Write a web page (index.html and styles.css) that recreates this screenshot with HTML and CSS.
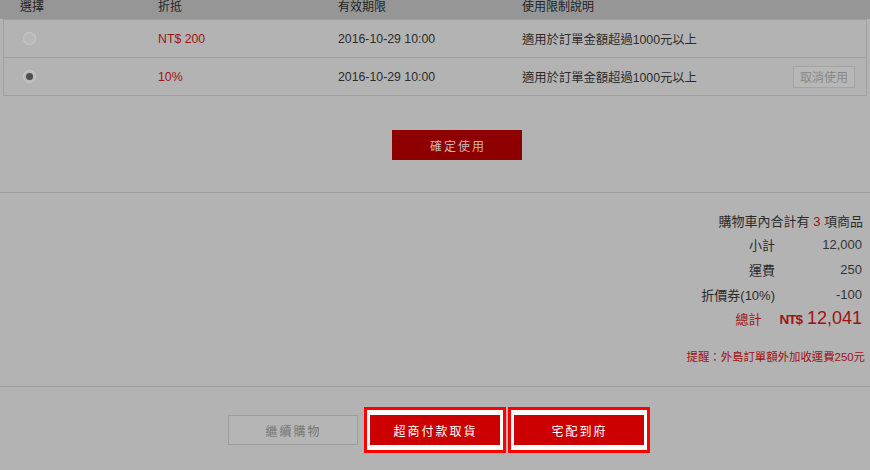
FILE: index.html
```html
<!DOCTYPE html>
<html lang="zh-Hant">
<head>
    <meta charset="UTF-8">
    <meta name="viewport" content="width=device-width, initial-scale=1.0">
    <title>購物車</title>
    <link rel="stylesheet" href="styles.css">
</head>
<body>
    <div class="coupons">
        <div class="coupons-head">
            <div>選擇</div>
            <div>折抵</div>
            <div>有效期限</div>
            <div>使用限制說明</div>
        </div>
        <div class="coupons-body">
            <div class="coupon-row">
                <div><span class="radio"></span></div>
                <div class="red">NT$ 200</div>
                <div>2016-10-29 10:00</div>
                <div class="desc">適用於訂單金額超過1000元以上</div>
            </div>
            <div class="coupon-row">
                <div><span class="radio checked"></span></div>
                <div class="red">10%</div>
                <div>2016-10-29 10:00</div>
                <div class="desc">
                    <span>適用於訂單金額超過1000元以上</span>
                    <button class="btn-cancel">取消使用</button>
                </div>
            </div>
        </div>
    </div>

    <div class="confirm">
        <button class="btn-confirm">確定使用</button>
    </div>

    <div class="summary">
        <div class="cart-count">購物車內合計有 <span class="red">3</span> 項商品</div>
        <div class="sum-row"><span class="label">小計</span><span class="value">12,000</span></div>
        <div class="sum-row"><span class="label">運費</span><span class="value">250</span></div>
        <div class="sum-row"><span class="label">折價券(10%)</span><span class="value">-100</span></div>
        <div class="sum-row total">
            <span class="label">總計</span>
            <span class="amount"><span class="currency">NT$</span> 12,041</span>
        </div>
        <div class="note">提醒：外島訂單額外加收運費250元</div>
    </div>

    <div class="actions">
        <button class="btn-continue">繼續購物</button>
        <div class="highlight"><button class="btn-checkout">超商付款取貨</button></div>
        <div class="highlight"><button class="btn-checkout">宅配到府</button></div>
    </div>
</body>
</html>
```

FILE: styles.css
```css
body {
    margin: 0;
    background-color: #b3b3b3;
    font-family: "Liberation Sans", "Noto Sans CJK TC", sans-serif;
    font-size: 13px;
    color: #2b2b2b;
    width: 870px;
    height: 470px;
    overflow: hidden;
}
button {
    font-family: inherit;
    cursor: pointer;
}
.red {
    color: #9e1212;
}
.coupons-head {
    display: grid;
    grid-template-columns: 138px 180px 184px 1fr;
    height: 19px;
    padding-left: 20px;
    background-color: #969696;
    font-size: 12px;
    line-height: 15px;
    color: #222;
}
.coupons-body {
    margin: 0 3px;
    border: 1px solid #a0a0a0;
    border-top: none;
}
.coupon-row {
    display: grid;
    grid-template-columns: 138px 180px 184px 1fr;
    align-items: center;
    height: 37px;
    padding-left: 16px;
    border-bottom: 1px solid #a0a0a0;
    font-size: 12.3px;
}
.coupon-row:first-child {
    border-top: 1px solid #a0a0a0;
}
.coupon-row:last-child {
    border-bottom: none;
}
.radio {
    display: block;
    box-sizing: border-box;
    width: 13px;
    height: 13px;
    margin-left: 3px;
    border: 1px solid #cbcbcb;
    border-radius: 50%;
    background-color: #b8b8b8;
    position: relative;
}
.radio.checked::after {
    content: "";
    position: absolute;
    left: 2px;
    top: 2px;
    width: 7px;
    height: 7px;
    border-radius: 50%;
    background-color: #4e4e4e;
}
.desc {
    display: flex;
    justify-content: space-between;
    align-items: center;
}
.btn-cancel {
    width: 62px;
    height: 22px;
    margin-right: 11px;
    padding: 0;
    border: 1px solid #a4a4a4;
    background-color: #b7b7b7;
    color: #888;
    font-size: 12px;
}
.confirm {
    display: flex;
    justify-content: center;
    padding: 34px 0 32px 44px;
    border-bottom: 1px solid #9d9d9d;
}
.btn-confirm {
    width: 130px;
    height: 30px;
    padding: 0 0 0 2px;
    border: none;
    background-color: #8e0000;
    color: #d0b6b6;
    font-size: 12px;
    letter-spacing: 2px;
}
.summary {
    display: flex;
    flex-direction: column;
    align-items: flex-end;
    padding: 19px 8px 19px 0;
    border-bottom: 1px solid #9d9d9d;
}
.cart-count {
    line-height: 20px;
    margin-right: -1px;
}
.sum-row {
    display: flex;
    align-items: center;
    height: 25px;
}
.sum-row .value {
    width: 87px;
    text-align: right;
    color: #333;
}
.sum-row.total {
    height: 23px;
    color: #9e1212;
}
.sum-row.total .label {
    margin-right: 18px;
}
.amount {
    font-size: 18px;
}
.currency {
    font-size: 13.5px;
    font-weight: bold;
    letter-spacing: -1px;
}
.note {
    margin-top: 17px;
    margin-right: -3px;
    line-height: 20px;
    font-size: 11.4px;
    color: #9e1212;
}
.actions {
    display: flex;
    justify-content: center;
    align-items: center;
    padding: 20px 0 0 7px;
}
.btn-continue {
    width: 130px;
    height: 30px;
    margin-right: 4px;
    padding: 0 0 0 2px;
    border: 1px solid #9c9c9c;
    background-color: #b5b5b5;
    color: #777;
    font-size: 12px;
    letter-spacing: 2px;
}
.highlight {
    display: flex;
    padding: 5px 3px;
    border: 3px solid #ff0000;
    background-color: #fff;
    margin-left: 2px;
}
.btn-checkout {
    width: 130px;
    height: 30px;
    padding: 0 0 0 2px;
    border: none;
    background-color: #cc0000;
    color: #fff;
    font-size: 12px;
    letter-spacing: 2px;
}
```
